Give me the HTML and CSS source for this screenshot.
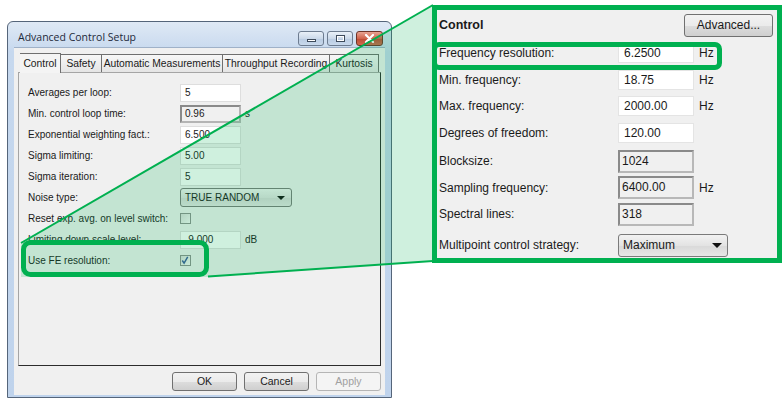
FILE: index.html
```html
<!DOCTYPE html>
<html lang="en">
<head>
    <meta charset="UTF-8">
    <title>Advanced Control Setup</title>
    <link rel="stylesheet" href="styles.css">
</head>
<body>
    <div class="stage">
        <div class="dialog">
            <div class="titlebar">
                <span class="title">Advanced Control Setup</span>
                <div class="caption-btns">
                    <span class="cap cap-min"><i></i></span>
                    <span class="cap cap-max"><i></i></span>
                    <span class="cap cap-close">
                        <svg width="11" height="9" viewBox="0 0 11 9"><path d="M2 1 L9 8 M9 1 L2 8" stroke="#fff" stroke-width="2.2" stroke-linecap="round"/></svg>
                    </span>
                </div>
            </div>

            <div class="client">
                <div class="tabs">
                    <span class="tab active">Control</span>
                    <span class="tab">Safety</span>
                    <span class="tab">Automatic Measurements</span>
                    <span class="tab">Throughput Recording</span>
                    <span class="tab">Kurtosis</span>
                </div>

                <div class="tab-panel">
                    <div class="row"><label>Averages per loop:</label><span class="edit">5</span></div>
                    <div class="row"><label>Min. control loop time:</label><span class="edit readonly">0.96</span><span class="unit">s</span></div>
                    <div class="row"><label>Exponential weighting fact.:</label><span class="edit">6.500</span></div>
                    <div class="row"><label>Sigma limiting:</label><span class="edit">5.00</span></div>
                    <div class="row"><label>Sigma iteration:</label><span class="edit">5</span></div>
                    <div class="row"><label>Noise type:</label><span class="combo">TRUE RANDOM<i class="arrow"></i></span></div>
                    <div class="row"><label>Reset exp. avg. on level switch:</label><span class="check"></span></div>
                    <div class="row"><label>Limiting down scale level:</label><span class="edit">-9.000</span><span class="unit">dB</span></div>
                    <div class="row"><label>Use FE resolution:</label>
                        <span class="check">
                            <svg width="11" height="11" viewBox="0 0 11 11"><path d="M2.5 5.5 L4.5 8.5 L8.5 1.5" fill="none" stroke="#3b5a9c" stroke-width="1.6"/></svg>
                        </span>
                    </div>
                </div>

                <div class="dialog-buttons">
                    <span class="btn">OK</span>
                    <span class="btn">Cancel</span>
                    <span class="btn disabled">Apply</span>
                </div>
            </div>
        </div>

        <div class="zoom-panel">
            <div class="zoom-head">
                <strong>Control</strong>
                <span class="btn btn-advanced">Advanced...</span>
            </div>
            <div class="zrow"><label>Frequency resolution:</label><span class="zedit">6.2500</span><span class="zunit">Hz</span></div>
            <div class="zrow"><label>Min. frequency:</label><span class="zedit">18.75</span><span class="zunit">Hz</span></div>
            <div class="zrow"><label>Max. frequency:</label><span class="zedit">2000.00</span><span class="zunit">Hz</span></div>
            <div class="zrow"><label>Degrees of freedom:</label><span class="zedit">120.00</span></div>
            <div class="zrow first-ro"><label>Blocksize:</label><span class="zedit readonly">1024</span></div>
            <div class="zrow"><label>Sampling frequency:</label><span class="zedit readonly">6400.00</span><span class="zunit">Hz</span></div>
            <div class="zrow"><label>Spectral lines:</label><span class="zedit readonly">318</span></div>
            <div class="zrow last"><label>Multipoint control strategy:</label><span class="zcombo">Maximum<i class="arrow"></i></span></div>
            <div class="mark"></div>
        </div>
    </div>

    <svg class="callout" width="784" height="402" viewBox="0 0 784 402">
        <polygon points="433,5 21,242 21,277 208,277 433,261" fill="rgba(0,176,80,0.19)"/>
        <line x1="433" y1="5" x2="21" y2="243" stroke="#00b050" stroke-width="2"/>
        <line x1="433" y1="261" x2="208" y2="276.5" stroke="#00b050" stroke-width="2"/>
        <rect x="23.5" y="242.5" width="183" height="32" rx="7" fill="none" stroke="#00b050" stroke-width="5"/>
    </svg>
</body>
</html>
```

FILE: styles.css
```css
* {
    margin: 0;
    padding: 0;
    box-sizing: border-box;
}

body {
    width: 784px;
    height: 402px;
    overflow: hidden;
    background: #fff;
    font-family: "Liberation Sans", Arial, sans-serif;
    color: #1a1a1a;
    position: relative;
}

.stage {
    display: flex;
    align-items: flex-start;
}

/* Dialog window */
.dialog {
    margin: 21px 0 0 7px;
    width: 385px;
    height: 377px;
    border: 1px solid #55657a;
    border-radius: 6px 6px 0 0;
    background: linear-gradient(#dfe9f5, #c6d8ee 30px, #bfd3ec);
    padding: 0 6px 2px 6px;
    display: flex;
    flex-direction: column;
}

.titlebar {
    height: 25px;
    display: flex;
    justify-content: space-between;
    align-items: flex-start;
}

.title {
    font-family: "Open Sans", sans-serif;
    font-size: 10.5px;
    color: #1e2a3a;
    margin: 8px 0 0 4px;
}

.caption-btns {
    display: flex;
    gap: 3px;
    margin: 9px 2px 0 0;
}

.cap {
    width: 26px;
    height: 15px;
    border: 1px solid #6d7c90;
    border-radius: 3px;
    background: linear-gradient(#e9f0f8, #cbd9ea 50%, #b9cbe2 51%, #c9d9ec);
    display: flex;
    align-items: center;
    justify-content: center;
}

.cap-min i {
    width: 9px;
    height: 3px;
    margin-top: 4px;
    background: #fff;
    border: 1px solid #3e4b5c;
}

.cap-max i {
    width: 9px;
    height: 7px;
    border: 1px solid #3e4b5c;
    box-shadow: inset 0 0 0 1px #fff;
}

.cap-close {
    width: 27px;
    border-color: #6e3328;
    background: linear-gradient(#e8a493, #d0634c 50%, #bd4a33 51%, #cf6b4f);
}

.client {
    flex: 1;
    background: #f0f0f0;
    border-top: 1px solid #9fb1c8;
    display: flex;
    flex-direction: column;
    font-size: 10px;
}

/* Tabs */
.tabs {
    display: grid;
    grid-template-columns: 41px 41px 121px 107px 49px;
    margin: 5px 0 0 6px;
    height: 19px;
    white-space: nowrap;
    font-size: 10.3px;
}

.tab {
    border: 1px solid #6f6f6f;
    border-bottom: none;
    border-left: none;
    background: linear-gradient(#f7f7f7, #e4e4e4);
    text-align: center;
    line-height: 18px;
    margin-top: 1px;
}

.tab.active {
    background: #f4f4f4;
    margin-top: 0;
    height: 20px;
    position: relative;
    z-index: 1;
    line-height: 19px;
}

.tab-panel {
    margin-left: 4px;
    width: 363px;
    height: 294px;
    border: 1px solid;
    border-color: #a5a5a5 #2c2c2c #2c2c2c #a5a5a5;
    padding: 9px 0 0 9px;
}

.row {
    display: flex;
    align-items: center;
    height: 21px;
    white-space: nowrap;
}

.row label {
    width: 152px;
    flex-shrink: 0;
}

.edit {
    width: 61px;
    height: 18px;
    background: #fff;
    border: 1px solid #dedede;
    padding-left: 4px;
    line-height: 16px;
}

.edit.readonly {
    background: #f0f0f0;
    border: 2px solid;
    border-color: #8a8a8a #b4b4b4 #b4b4b4 #8a8a8a;
    padding-left: 3px;
    line-height: 14px;
}

.unit {
    margin-left: 4px;
}

.combo {
    width: 112px;
    height: 19px;
    border: 1px solid #7a7a7a;
    border-radius: 3px;
    background: linear-gradient(#f2f2f2, #e3e3e3 50%, #d9d9d9 51%, #e6e6e6);
    padding-left: 4px;
    display: flex;
    align-items: center;
    justify-content: space-between;
}

.arrow {
    width: 0;
    height: 0;
    border-left: 4px solid transparent;
    border-right: 4px solid transparent;
    border-top: 4px solid #111;
    margin-right: 6px;
}

.check {
    width: 11px;
    height: 11px;
    border: 1px solid #8e8f8f;
    background: linear-gradient(135deg, #dcdcdc, #f8f8f8);
    display: flex;
}

.check svg {
    margin: -1px 0 0 -1px;
}

.dialog-buttons {
    display: flex;
    justify-content: flex-end;
    gap: 7px;
    margin: 6px 4px 0 0;
}

.btn {
    width: 65px;
    height: 19px;
    border: 1px solid #707070;
    border-radius: 3px;
    background: linear-gradient(#f2f2f2, #ebebeb 50%, #dddddd 51%, #cfcfcf);
    font-size: 10.5px;
    text-align: center;
    line-height: 17px;
}

.btn.disabled {
    color: #a0a0a0;
    border-color: #b5b5b5;
    background: #f4f4f4;
}

/* Zoomed panel */
.zoom-panel {
    position: relative;
    margin: 5px 0 0 40px;
    width: 350px;
    height: 258px;
    border: 5px solid #00b050;
    background: #f0f0f0;
    padding-left: 2px;
    font-size: 12px;
}

.zoom-head {
    height: 30px;
    display: flex;
    justify-content: space-between;
    align-items: center;
}

.zoom-head strong {
    font-size: 12.5px;
}

.btn-advanced {
    width: 89px;
    height: 23px;
    margin-right: 4px;
    font-size: 12px;
    line-height: 21px;
}

.zrow {
    display: flex;
    align-items: center;
    height: 26.5px;
}

.zrow.first-ro {
    margin-top: 2px;
}

.zrow.last {
    margin-top: 4.5px;
    height: 26px;
}

.zrow label {
    width: 179px;
    flex-shrink: 0;
}

.zedit {
    width: 76px;
    height: 20px;
    background: #fff;
    border: 1px solid #e4e4e4;
    padding-left: 5px;
    line-height: 18px;
}

.zedit.readonly {
    height: 23px;
    background: #f0f0f0;
    border: 2px solid;
    border-color: #8a8a8a #b8b8b8 #b8b8b8 #8a8a8a;
    padding-left: 2px;
    line-height: 19px;
}

.zunit {
    margin-left: 5px;
}

.zcombo {
    width: 110px;
    height: 23px;
    border: 1px solid #7a7a7a;
    border-radius: 3px;
    background: linear-gradient(#f2f2f2, #e3e3e3 50%, #d9d9d9 51%, #e6e6e6);
    padding-left: 4px;
    display: flex;
    align-items: center;
    justify-content: space-between;
}

.zcombo .arrow {
    border-left-width: 5px;
    border-right-width: 5px;
    border-top-width: 5px;
    margin-right: 5px;
}

/* highlight around the frequency resolution row */
.mark {
    position: absolute;
    left: -5px;
    top: 32px;
    width: 290px;
    height: 28px;
    border: 5px solid #00b050;
    border-radius: 7px;
}

.callout {
    position: absolute;
    left: 0;
    top: 0;
    pointer-events: none;
}
```
